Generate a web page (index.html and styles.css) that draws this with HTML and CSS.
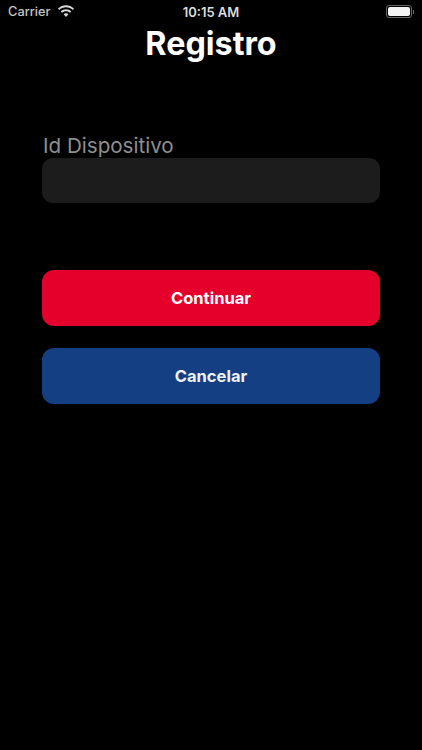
FILE: index.html
```html
<!DOCTYPE html>
<html>
  <head>
    <title>Registro</title>

    <link rel="stylesheet" href="styles.css">
  </head>
  <body>
    <div class="status-bar">
      <div class="status-left">
        <span class="carrier">Carrier</span>
        <svg class="wifi-icon" width="18" height="13" viewBox="0 0 18 13">
          <path d="M9 2.2c2.6 0 5 1 6.8 2.7l1.2-1.3C14.900 1.500 12.100.3 9 .3S3.100 1.500 1 3.600l1.200 1.300C4 3.200 6.400 2.200 9 2.200z" fill="#d8d8d8"/>
          <path d="M9 6.200c1.500 0 2.900.6 4 1.600l1.300-1.300C12.900 5.100 11 4.300 9 4.300s-3.900.8-5.300 2.200L5 7.800c1.100-1 2.500-1.600 4-1.600z" fill="#d8d8d8"/>
          <path d="M9 8.300c-1 0-1.800.4-2.400 1L9 12l2.400-2.700c-.6-.6-1.400-1-2.400-1z" fill="#d8d8d8"/>
        </svg>
      </div>
      <span class="clock">10:15 AM</span>
      <div class="battery">
        <div class="battery-body">
          <div class="battery-level"></div>
        </div>
        <div class="battery-cap"></div>
      </div>
    </div>

    <h1 class="title">Registro</h1>

    <div class="form">
      <label class="field-label">Id Dispositivo</label>
      <div class="field-input"></div>

      <button class="action-button continue-button">Continuar</button>
      <button class="action-button cancel-button">Cancelar</button>
    </div>
  </body>
</html>
```

FILE: styles.css
```css
body {
  margin: 0;
  height: 750px;
  overflow: hidden;
  background-color: black;
  color: white;
  font-family: Inter, "Liberation Sans", sans-serif;
}

.status-bar {
  display: flex;
  align-items: center;
  height: 25px;
  padding: 0 8px;
}

.status-left {
  flex: 1;
  display: flex;
  align-items: center;
  gap: 6px;
  margin-top: -2px;
}

.carrier {
  font-size: 12.800px;
  font-weight: 500;
  color: #c4c4c4;
}

.wifi-icon {
  display: block;
}

.clock {
  font-size: 13px;
  font-weight: 600;
  color: #dcdcdc;
  margin-top: -2px;
}

.battery {
  flex: 1;
  display: flex;
  justify-content: flex-end;
  align-items: center;
  margin-top: -2px;
}

.battery-body {
  width: 22px;
  height: 9px;
  padding: 1px;
  border: 1px solid #666;
  border-radius: 3px;
}

.battery-level {
  height: 100%;
  background-color: #f4f4f4;
  border-radius: 2px;
}

.battery-cap {
  width: 1px;
  height: 4px;
  margin-left: 1px;
  background-color: #666;
}

.title {
  margin: 0;
  font-size: 32.300px;
  font-weight: 700;
  line-height: 38px;
  text-align: center;
}

.form {
  display: flex;
  flex-direction: column;
  padding: 69px 42px 0;
}

.field-label {
  font-size: 20.600px;
  line-height: 26px;
  padding: 1px 0 0 1px;
  margin-bottom: -1px;
  color: #8f8f8f;
}

.field-input {
  height: 45px;
  background-color: #1c1c1c;
  border-radius: 11px;
  margin-bottom: 67px;
}

.action-button {
  height: 56px;
  border: none;
  border-radius: 12px;
  color: white;
  font-family: Inter, "Liberation Sans", sans-serif;
  font-size: 16.500px;
  font-weight: 700;
  margin-bottom: 22px;
  padding-bottom: 1px;
}

.continue-button {
  background-color: #e4002b;
}

.cancel-button {
  background-color: #143f82;
  color: #eef2f8;
}
```
